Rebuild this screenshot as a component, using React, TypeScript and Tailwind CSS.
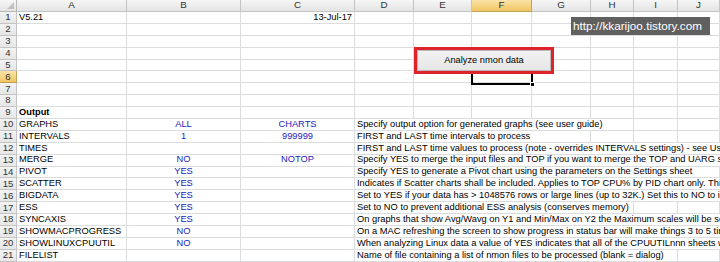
import React from 'react';

type Row = {
  n: number;
  a?: string;
  bold?: boolean;
  b?: string;
  c?: string;
  cRight?: boolean;
  d?: string;
};

const cols = ['A', 'B', 'C', 'D', 'E', 'F', 'G', 'H', 'I', 'J'];

const rows: Row[] = [
  { n: 1, a: 'V5.21', c: '13-Jul-17', cRight: true },
  { n: 2 },
  { n: 3 },
  { n: 4 },
  { n: 5 },
  { n: 6 },
  { n: 7 },
  { n: 8 },
  { n: 9, a: 'Output', bold: true },
  { n: 10, a: 'GRAPHS', b: 'ALL', c: 'CHARTS', d: 'Specify output option for generated graphs (see user guide)' },
  { n: 11, a: 'INTERVALS', b: '1', c: '999999', d: 'FIRST and LAST time intervals to process' },
  { n: 12, a: 'TIMES', d: 'FIRST and LAST time values to process (note - overrides INTERVALS settings) - see User Guide' },
  { n: 13, a: 'MERGE', b: 'NO', c: 'NOTOP', d: 'Specify YES to merge the input files and TOP if you want to merge the TOP and UARG sections' },
  { n: 14, a: 'PIVOT', b: 'YES', d: 'Specify YES to generate a Pivot chart using the parameters on the Settings sheet' },
  { n: 15, a: 'SCATTER', b: 'YES', d: 'Indicates if Scatter charts shall be included.  Applies to TOP CPU% by PID chart only.  This' },
  { n: 16, a: 'BIGDATA', b: 'YES', d: 'Set to YES if your data has > 1048576 rows or large lines (up to 32K.)  Set this to NO to improve' },
  { n: 17, a: 'ESS', b: 'YES', d: 'Set to NO to prevent additional ESS analysis (conserves memory)' },
  { n: 18, a: 'SYNCAXIS', b: 'YES', d: 'On graphs that show Avg/Wavg on Y1 and Min/Max on Y2 the Maximum scales will be set' },
  { n: 19, a: 'SHOWMACPROGRESS', b: 'NO', d: 'On a MAC refreshing the screen to show progress in status bar will make things 3 to 5 times' },
  { n: 20, a: 'SHOWLINUXCPUUTIL', b: 'NO', d: 'When analyzing Linux data a value of YES indicates that all of the CPUUTILnnn sheets will' },
  { n: 21, a: 'FILELIST', d: 'Name of file containing a list of nmon files to be processed (blank = dialog)' },
];

const cell = 'border-r border-b border-[#dadcdd] flex items-center px-[2px] whitespace-nowrap leading-none';

export default function App() {
  return (
    <div className="relative w-[720px] h-[262px] overflow-hidden bg-white text-[9.3px] text-black font-['Liberation_Sans',Arial,sans-serif]">
      <div className="grid grid-cols-[17px_110px_114px_114px_59px_58px_60px_59px_43px_44px_42px] grid-rows-[12px_repeat(21,11.9px)]">
        {/* Column headers */}
        <div className="relative border-r border-b border-[#b7b7b7] bg-gradient-to-b from-[#f6f6f6] to-[#e4e4e4]">
          <div className="absolute right-[2px] bottom-[2px] w-0 h-0 border-l-[7px] border-l-transparent border-b-[7px] border-b-[#c2c2c2]" />
        </div>
        {cols.map((c) => (
          <div
            key={c}
            className={
              c === 'F'
                ? 'flex items-center justify-center border-r border-b border-[#c2a25a] bg-gradient-to-b from-[#fae3a8] to-[#f0c55f] text-[#333] text-[9.8px]'
                : 'flex items-center justify-center border-r border-b border-[#c4c4c4] bg-gradient-to-b from-[#f6f6f6] to-[#e4e4e4] text-[#333] text-[9.8px]'
            }
          >
            {c}
          </div>
        ))}

        {rows.map((r) => (
          <React.Fragment key={r.n}>
            <div
              className={
                r.n === 6
                  ? 'flex items-center justify-center border-r border-b border-[#c2a25a] bg-gradient-to-b from-[#fae3a8] to-[#f0c55f] text-[#333] text-[9.6px]'
                  : 'flex items-center justify-center border-r border-b border-[#c4c4c4] bg-gradient-to-b from-[#f3f3f3] to-[#e6e6e6] text-[#333] text-[9.6px]'
              }
            >
              {r.n}
            </div>
            <div className={`${cell} ${r.bold ? 'font-bold' : ''}`}>{r.a}</div>
            <div className={`${cell} justify-center text-[#2222bb]`}>{r.b}</div>
            <div className={`${cell} ${r.cRight ? 'justify-end' : 'justify-center text-[#2222bb]'}`}>{r.c}</div>
            <div className={`${cell} relative`}>
              {r.d && <span className="relative z-10 bg-white h-full flex items-center pr-[3px]">{r.d}</span>}
            </div>
            <div className={cell} />
            <div className={cell} />
            <div className={cell} />
            <div className={cell} />
            <div className={cell} />
            <div className={cell} />
          </React.Fragment>
        ))}
      </div>

      {/* Selected cell F6 */}
      <div className="absolute left-[471px] top-[71px] w-[62px] h-[14px] border-2 border-black z-20">
        <div className="absolute right-[-4px] bottom-[-4px] w-[5px] h-[5px] bg-black border border-white" />
      </div>

      {/* Macro button */}
      <div className="absolute left-[414px] top-[47px] w-[140px] h-[27px] border-[3px] border-[#e0222b] z-30 bg-[#ebebeb]">
        <div className="w-full h-full border border-[#b9b9b9] bg-gradient-to-b from-[#f2f2f2] to-[#e6e6e6] flex items-center justify-center text-[9.3px] text-black">
          Analyze nmon data
        </div>
      </div>

      {/* Watermark */}
      <div className="absolute left-[571px] top-[17px] w-[139px] h-[18px] bg-[#4f4f4f]/90 z-30 flex items-center pl-[2px] text-white text-[11.75px] leading-none">
        http://kkarijoo.tistory.com
      </div>
    </div>
  );
}
